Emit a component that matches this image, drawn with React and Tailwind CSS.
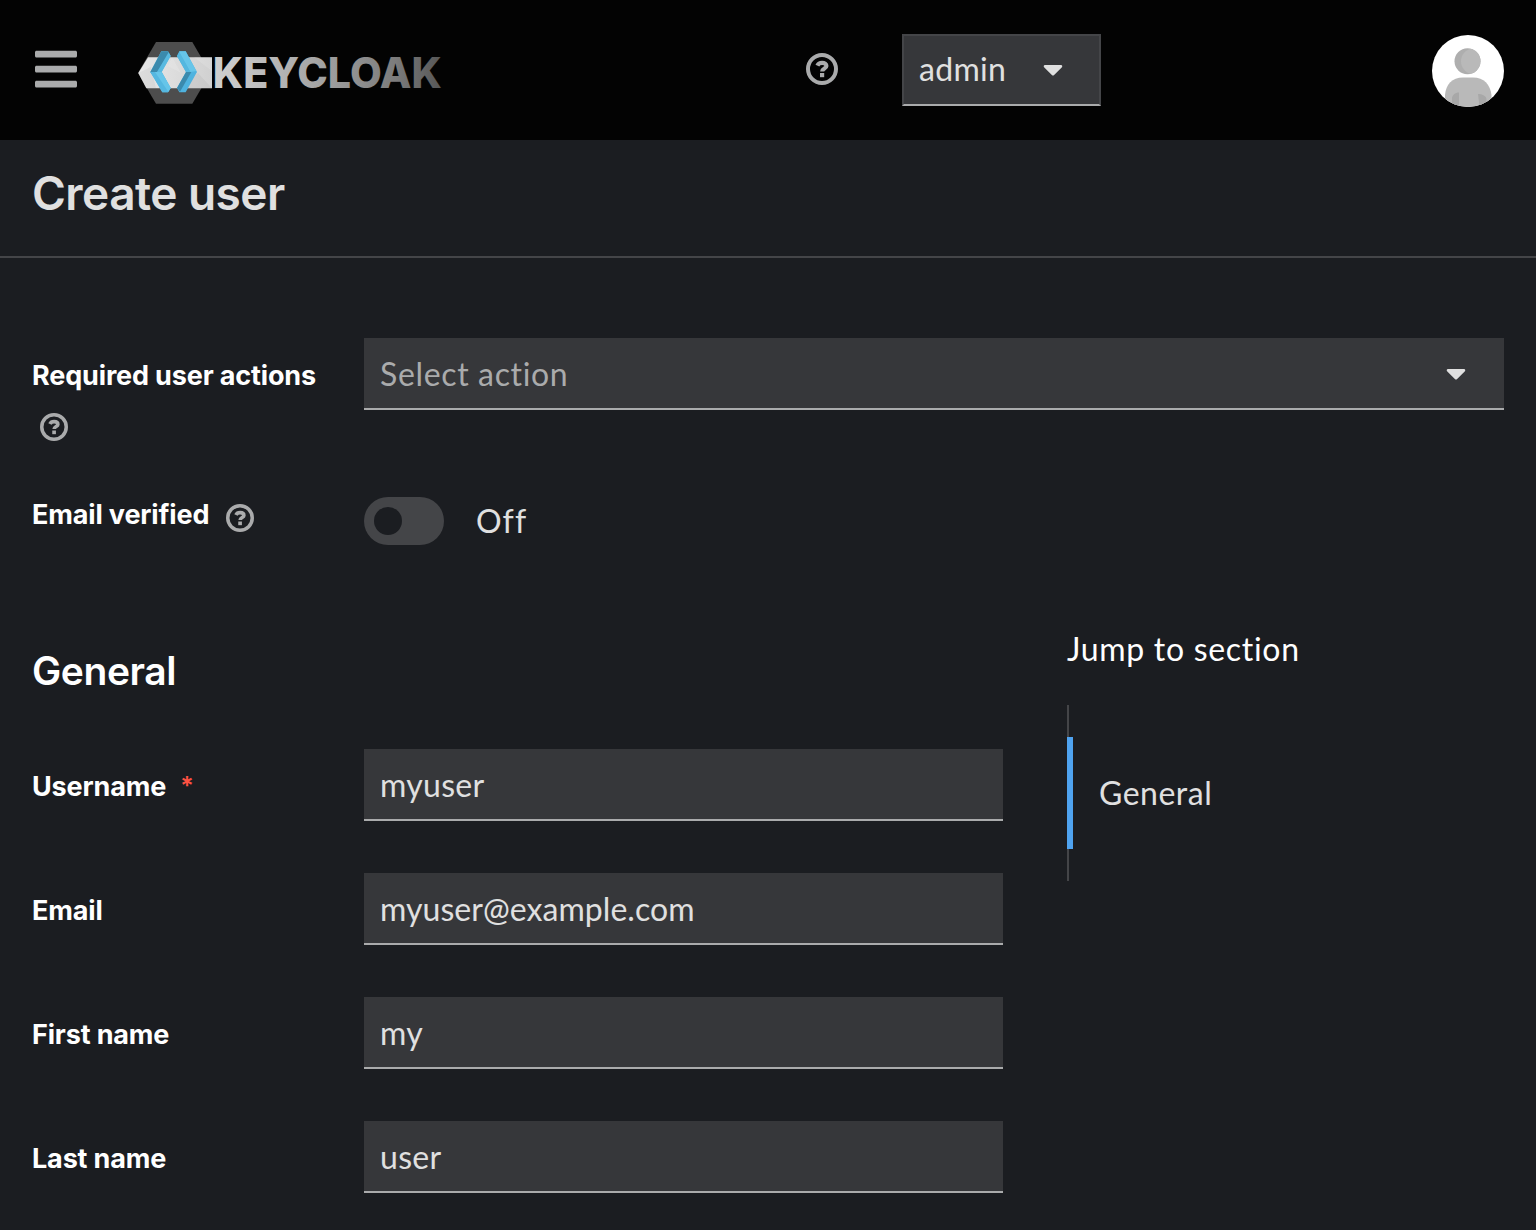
import { FaBars, FaCaretDown } from "react-icons/fa";

const body = "font-['Lato',sans-serif] text-[32px] leading-[48px] [font-variant-ligatures:none]";
const heading = "font-['Inter',sans-serif] font-[580]";
const labelText = "font-['Inter',sans-serif] text-[27px] leading-[42px] font-bold tracking-[-0.15px] text-white";

function HelpIcon({ className }) {
  return (
    <svg viewBox="0 0 32 32" className={className} fill="none" stroke="#aaabac" aria-hidden="true">
      <circle cx="16" cy="16" r="14" strokeWidth="4" />
      <path d="M11.4 12.6C12.2 10.8 13.8 9.9 16.1 9.9C18.7 9.9 20.4 11.2 20.4 13C20.4 15.6 16.2 15.4 16.2 18.4" strokeWidth="4.2" />
      <rect x="14" y="20" width="4.2" height="4.2" fill="#aaabac" stroke="none" />
    </svg>
  );
}

function Logo() {
  return (
    <svg viewBox="0 0 320 64" className="h-16 w-[320px]" role="img" aria-label="Keycloak">
      <defs>
        <linearGradient id="metal" x1="0" x2="304" y1="0" y2="0" gradientUnits="userSpaceOnUse">
          <stop offset="0" stopColor="#e8e8e8" />
          <stop offset="0.3" stopColor="#cbcbcb" />
          <stop offset="0.6" stopColor="#a3a3a3" />
          <stop offset="0.85" stopColor="#7b7b7b" />
          <stop offset="1" stopColor="#565656" />
        </linearGradient>
      </defs>
      <path d="M18 1H54.3L72.3 32L54.3 62.7H18L0 32Z" fill="#4d4d4d" />
      <path d="M10 16.2H74V47.2H8.3L0.3 32Z" fill="url(#metal)" />
      <path d="M34 16.2L43 32L30 25ZM56 16.2L74 30V16.2Z" fill="#fff" opacity="0.14" />
      <path d="M43 47.2L60 32L74 47.2ZM0.3 32L13 26L18 47.2H8.3Z" fill="#888" opacity="0.12" />
      <g transform="translate(-118 -12) scale(.333333)">
        <path d="M424 67H444L452 81L425 129L452 177L444 190H427L391 129Z" fill="#63c4e8" />
        <path d="M424 67H444L447 72L403 145L391 129Z" fill="#3b8aad" />
        <path d="M452 81L425 129H411L446 70Z" fill="#58b9e0" />
        <path d="M391 129H425L452 177L444 190H427Z" fill="#55b7e0" />
        <path d="M405 129H425L452 177L445 188Z" fill="#66c5e9" />
        <path d="M478 67H497L531 129L497 190H478L471 177L498 129L471 81Z" fill="#4fb3df" />
        <path d="M478 67H497L529 126L511 129L480 74Z" fill="#66c5e9" />
        <path d="M471 81L478 69L511 129H498Z" fill="#54b7df" />
        <path d="M471 177L498 129H514L480 188Z" fill="#3b8aad" />
      </g>
      <text
        x="74.8"
        y="47.2"
        textLength="229"
        lengthAdjust="spacingAndGlyphs"
        fill="url(#metal)"
        className="font-['Inter',sans-serif] text-[42.6px] font-extrabold"
      >
        KEYCLOAK
      </text>
    </svg>
  );
}

function Avatar() {
  return (
    <svg viewBox="0 0 72 72" className="size-[72px]" aria-hidden="true">
      <defs>
        <clipPath id="face">
          <circle cx="36" cy="36" r="36" />
        </clipPath>
        <clipPath id="head">
          <circle cx="35.5" cy="26.3" r="13" />
        </clipPath>
      </defs>
      <g clipPath="url(#face)">
        <rect width="72" height="72" fill="#fff" />
        <circle cx="35.5" cy="26.3" r="13" fill="#aeaeae" />
        <circle cx="42" cy="26.3" r="13" fill="#b9b9b9" clipPath="url(#head)" />
        <path d="M13 72V60C14 49 20 42.5 31 42.5H41C52 42.5 58 49 59.5 60V72Z" fill="#b9b9b9" />
        <path d="M20 72V64C20 60 23 57.5 27 57.5V72ZM46 59C50 59 54 60.5 54.5 64V72H47.5Z" fill="#a8a8a8" />
      </g>
    </svg>
  );
}

const fields = [
  { label: "Username", value: "myuser", required: true, spacing: "tracking-[0.3px]" },
  { label: "Email", value: "myuser@example.com", spacing: "tracking-[0.05px]" },
  { label: "First name", value: "my", spacing: "tracking-[0.35px]" },
  { label: "Last name", value: "user", spacing: "tracking-[0.3px]" },
];

export default function App() {
  return (
    <div className="flex h-[1230px] w-[1536px] flex-col overflow-hidden bg-[#1b1d21] text-[#e0e0e0]">
      <header className="flex h-[140px] shrink-0 items-center bg-[#030303] pr-8 pl-[35px]">
        <button aria-label="Menu" className="mt-[-2px]">
          <FaBars className="h-12 w-[42px] text-[#aaabac]" />
        </button>
        <div className="mt-[5px] ml-[61px]">
          <Logo />
        </div>
        <button aria-label="Help" className="mt-[-2px] ml-[348px]">
          <HelpIcon className="size-8" />
        </button>
        <button className="ml-16 flex h-[72px] w-[199px] items-center border-2 border-[#444548] border-b-[#aaabac] bg-[#36373a] pb-[2px] pl-[15px]">
          <span className={`${body} w-[124px] text-left tracking-[0.3px]`}>admin</span>
          <FaCaretDown className="h-8 w-5" />
        </button>
        <div className="mt-px ml-auto">
          <Avatar />
        </div>
      </header>

      <div className="h-[118px] shrink-0 border-b-2 border-[#444548] px-8 pt-[22px]">
        <h1 className={`${heading} text-[46px] leading-[62px] tracking-[-0.55px]`}>Create user</h1>
      </div>

      <main className="px-8 pt-20">
        <div className="flex h-[159px] items-start">
          <div className="w-[332px] pt-[17px]">
            <div className={labelText}>Required user actions</div>
            <button aria-label="More help" className="mt-4 ml-2 block">
              <HelpIcon className="size-7" />
            </button>
          </div>
          <button className="flex h-[72px] flex-1 items-center justify-between border-b-2 border-[#aaabac] bg-[#36373a] pr-[38px] pl-4">
            <span className={`${body} pt-px tracking-[0.65px] text-[#aaabac]`}>Select action</span>
            <FaCaretDown className="h-8 w-5" />
          </button>
        </div>

        <div className="flex h-[120px] items-start">
          <div className="flex w-[332px] items-start">
            <span className={`${labelText} mt-[-3px] w-[178px] whitespace-nowrap`}>Email verified</span>
            <button aria-label="More help" className="mt-[7px] ml-4">
              <HelpIcon className="size-7" />
            </button>
          </div>
          <div className="flex h-12 w-20 items-center rounded-full bg-[#444548] pl-[10px]">
            <span className="size-7 rounded-full bg-[#1b1d21]" />
          </div>
          <span className={`${body} ml-[32px] tracking-[1.1px]`}>Off</span>
        </div>

        <div className="flex items-start">
          <section className="w-[971px]">
            <h2 className={`${heading} pt-7 pb-7 text-[39px] leading-[52px] tracking-[-0.4px] text-white`}>General</h2>
            <div className="flex flex-col gap-[52px] pt-6">
              {fields.map((f) => (
                <label key={f.label} className="flex h-[72px] items-center">
                  <span className="flex w-[332px] items-center pt-1">
                    <span className={labelText}>{f.label}</span>
                    {f.required && (
                      <span className="-mt-[2px] ml-[14px] font-['Inter',sans-serif] text-[25px] leading-[42px] font-semibold text-[#fe5142]">*</span>
                    )}
                  </span>
                  <span className={`${body} ${f.spacing} flex h-[72px] flex-1 items-center border-b-2 border-[#aaabac] bg-[#36373a] pt-[2px] pl-4`}>
                    {f.value}
                  </span>
                </label>
              ))}
            </div>
          </section>
          <nav className="ml-16">
            <div className={`${body} mt-2 tracking-[0.7px] text-white`}>Jump to section</div>
            <div className="mt-8 border-l-2 border-[#444548] py-8">
              <a className={`${body} -ml-[2px] flex h-28 items-center border-l-[6px] border-[#4fa3f0] pl-[26px] tracking-[0.5px]`}>
                General
              </a>
            </div>
          </nav>
        </div>
      </main>
    </div>
  );
}
